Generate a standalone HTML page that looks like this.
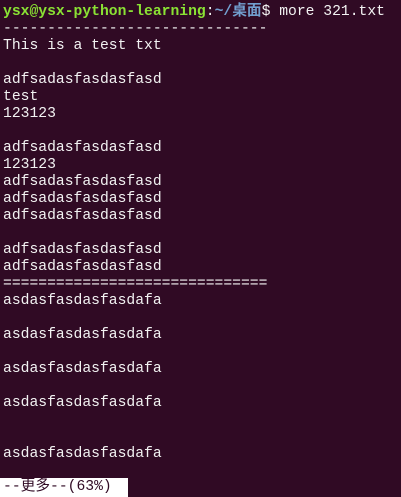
<!DOCTYPE html>
<html><head><meta charset="utf-8"><style>
html,body{margin:0;padding:0;background:#300a24;width:401px;height:497px;overflow:hidden}
pre{margin:0;padding:4px 0 0 3px;font-family:"Liberation Mono","DejaVu Sans Mono","Noto Sans CJK SC",monospace;font-size:14.7px;line-height:17px;color:#f2f2f2;letter-spacing:0}
.g{color:#8ae234;font-weight:bold}.b{color:#729fcf;font-weight:bold}
.m{position:absolute;left:0;top:478px;width:128px;height:19px;background:#ffffff;color:#300a24;font-family:"Liberation Mono","Noto Sans CJK SC",monospace;font-size:14.7px;line-height:19px;padding-left:3px;box-sizing:border-box}
</style></head><body>
<pre><span class="g">ysx@ysx-python-learning</span>:<span class="b">~/桌面</span>$ more 321.txt
------------------------------
This is a test txt

adfsadasfasdasfasd
test
123123

adfsadasfasdasfasd
123123
adfsadasfasdasfasd
adfsadasfasdasfasd
adfsadasfasdasfasd

adfsadasfasdasfasd
adfsadasfasdasfasd
==============================
asdasfasdasfasdafa

asdasfasdasfasdafa

asdasfasdasfasdafa

asdasfasdasfasdafa


asdasfasdasfasdafa</pre>
<div class="m">--更多--(63%)</div>
</body></html>
